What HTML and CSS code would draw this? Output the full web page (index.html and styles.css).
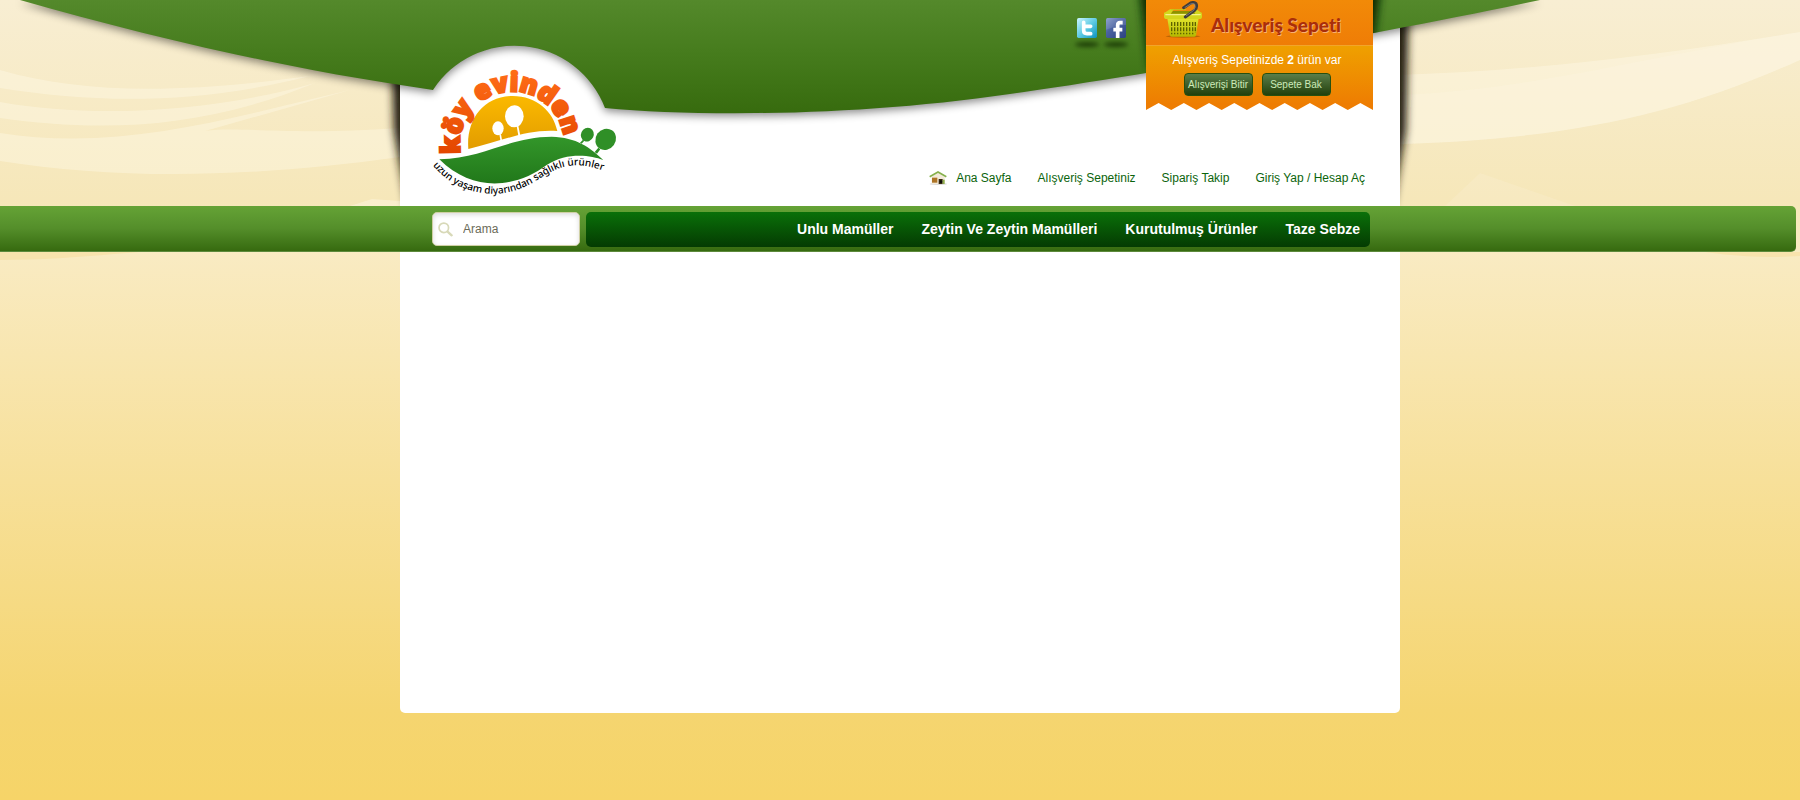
FILE: index.html
```html
<!DOCTYPE html>
<html lang="tr">
<head>
<meta charset="utf-8">
<meta name="viewport" content="width=device-width, initial-scale=1">
<title>Köy Evinden</title>
<link rel="stylesheet" href="styles.css">
</head>
<body>
<div class="scene scenery" aria-hidden="true">
  <svg class="scene-art" viewBox="0 0 1800 280">
    <defs><filter id="soft" x="-200%" y="-20%" width="500%" height="140%"><feGaussianBlur stdDeviation="4"/></filter></defs>
    <g fill="#fffbe9" fill-opacity=".4">
      <path d="M0 70C90 96 190 92 310 76C200 104 100 104 0 88Z"/>
      <path d="M0 102C100 120 220 110 315 83C200 130 100 132 0 118Z"/>
      <path d="M0 133C120 152 230 118 350 90L205 131C240 126 290 136 400 128V157C250 178 120 180 0 161Z"/>
      <path d="M350 206L372 199L400 201V206Z"/>
      <path d="M1400 75C1550 70 1680 52 1800 32V60C1680 114 1570 139 1400 144Z"/>
      <path d="M1400 95C1530 90 1630 60 1800 32V60C1680 114 1570 139 1400 144Z" fill-opacity=".2"/>
      <path d="M1445 206L1480 173L1575 206Z" fill-opacity=".15"/>
    </g>
    <path d="M0 252H140C90 256 50 260 0 260ZM1705 252C1740 257 1770 258 1800 256V252Z" fill="#f8e3ad"/>
    <path d="M391 30H410V206H407L394 130ZM1409 -10H1390V206H1393L1406 130Z" fill="#221d10" filter="url(#soft)"/>
  </svg>
</div>

<header class="site-header">
  <div class="scene" aria-hidden="true">
    <svg class="scene-art" viewBox="0 0 1800 280">
      <defs>
        <linearGradient id="leaf" x1="0" y1="0" x2="0" y2="113" gradientUnits="userSpaceOnUse"><stop offset="0" stop-color="#54892b"/><stop offset=".5" stop-color="#457b1c"/><stop offset="1" stop-color="#376b0e"/></linearGradient>
        <clipPath id="hill"><path d="M20 0C150 37 290 70 433 90A97 97 0 0 1 605 108C700 117 860 116 1010 94C1150 74 1380 34 1540 0Z"/></clipPath>
        <filter id="glow" x="-20%" y="-20%" width="140%" height="140%"><feGaussianBlur stdDeviation="4"/></filter>
      </defs>
      <path class="wave" d="M20 0C150 37 290 70 433 90A97 97 0 0 1 605 108C700 117 860 116 1010 94C1150 74 1380 34 1540 0Z" fill="url(#leaf)"/>
      <g clip-path="url(#hill)"><path d="M1139 -10H1381L1370 70H1149Z" fill="#102a02" filter="url(#glow)"/></g>
    </svg>
  </div>
  <div class="header-inner">
    <a class="logo" href="#" aria-label="Köy Evinden">
      <svg class="logo-art" viewBox="150 141 570 399">
        <defs>
          <linearGradient id="sun" x1="0" y1="0" x2="0" y2="1"><stop offset="0" stop-color="#fbb900"/><stop offset="1" stop-color="#e29c00"/></linearGradient>
          <linearGradient id="field" x1="0" y1="0" x2="0" y2="1"><stop offset="0" stop-color="#33962a"/><stop offset="1" stop-color="#21781a"/></linearGradient>
          <linearGradient id="flame" x1="0" y1="150" x2="0" y2="400" gradientUnits="userSpaceOnUse"><stop offset="0" stop-color="#ff6d17"/><stop offset="1" stop-color="#e34600"/></linearGradient>
          <path id="arch" d="M242 400A157 157 0 1 1 545 421"/>
          <path id="ridge" d="M158 436C210 497 270 519 340 522C470 517 490 437 590 436C620 436 650 444 690 459"/>
        </defs>
        <path d="M265 387C258 300 310 228 398 228C470 228 520 275 532 333C440 327 370 362 265 387Z" fill="url(#sun)"/>
        <g fill="#fff"><ellipse cx="354" cy="325" rx="17" ry="21"/><ellipse cx="403" cy="289" rx="28" ry="33"/><path d="M358 343H363L366 360H361ZM410 318L415 317L421 347H415Z"/></g>
        <path d="M178 418C310 415 390 350 515 350C590 352 630 382 670 420C630 405 560 396 500 435C410 503 280 520 178 418Z" fill="url(#field)"/>
        <g fill="#2f8f27"><ellipse cx="622" cy="344" rx="19" ry="21" transform="rotate(25 622 344)"/><ellipse cx="677" cy="358" rx="30" ry="33" transform="rotate(35 677 358)"/><path d="M609 359L613 362L605 371L600 368ZM655 383L661 388L651 401L644 396Z"/></g>
        <text class="logo-name" fill="url(#flame)" stroke="url(#flame)"><textPath href="#arch">köy evinden</textPath></text>
        <text class="logo-motto"><textPath href="#ridge">uzun yaşam diyarından sağlıklı ürünler</textPath></text>
      </svg>
    </a>

    <div class="header-side">
      <div class="header-top">
        <div class="social">
          <a href="#" aria-label="Twitter"><svg viewBox="0 0 60 60"><defs><linearGradient id="tw" x1="0" y1="0" x2="1" y2="1"><stop offset="0" stop-color="#cdf6ff"/><stop offset=".5" stop-color="#5fcbe4"/><stop offset="1" stop-color="#0c92bd"/></linearGradient></defs><rect width="60" height="60" rx="5" fill="url(#tw)"/><path d="M20 13V37Q20 47 30 47H41M21 25H41" fill="none" stroke="#fff" stroke-width="11" stroke-linecap="round"/></svg></a>
          <a href="#" aria-label="Facebook"><svg viewBox="0 0 60 60"><defs><linearGradient id="fb" x1="0" y1="0" x2="1" y2="1"><stop offset="0" stop-color="#7f95c6"/><stop offset=".4" stop-color="#4a62a0"/><stop offset="1" stop-color="#2c4381"/></linearGradient></defs><rect width="60" height="60" rx="5" fill="url(#fb)"/><path d="M0 5Q0 0 5 0H55Q60 0 60 5V20Q30 22 0 35Z" fill="#fff" fill-opacity=".12"/><path d="M50 14H42Q35 14 35 22V60M22 35H49" fill="none" stroke="#fff" stroke-width="11"/></svg></a>
        </div>

        <section class="basket">
          <div class="basket-head">
            <svg class="basket-icon" viewBox="0 0 114 111">
              <defs><linearGradient id="lime" x1="0" y1="0" x2="0" y2="1"><stop offset="0" stop-color="#e2e32c"/><stop offset="1" stop-color="#b4b800"/></linearGradient></defs>
              <ellipse cx="57" cy="106" rx="52" ry="4" fill="#8a4a00" fill-opacity=".5"/>
              <path d="M10 52H104L96 103Q95 107 91 107H23Q19 107 18 103Z" fill="url(#lime)"/>
              <path d="M18 40L26 30H88L96 40Z" fill="#8d9200"/>
              <path d="M0 37Q0 34 4 34L18 25H30L20 38H94L86 25H97L110 34Q114 35 114 39V47Q114 54 106 54H8Q0 54 0 47Z" fill="#d3d61c"/>
              <path d="M22 26H66" stroke="#c3c71a" stroke-width="3"/>
              <path d="M4 41H110" stroke="#f4f487" stroke-width="4"/>
              <g stroke="#5f6300" stroke-width="4" stroke-dasharray="12 4"><path d="M23 63V100M32 63V100M41 63V100M50 63V100M59 63V100M68 63V100M77 63V100M86 63V100M94 63V96"/></g>
              <path d="M64 48L92 28Q101 18 96 8Q90 2 80 6L59 20" fill="none" stroke="#3f3d3c" stroke-width="9" stroke-linecap="round" stroke-linejoin="round"/><path d="M66 45L89 28Q97 18 92 9Q87 6 80 9L62 20" fill="none" stroke="#999" stroke-width="2"/>
            </svg>
            <h2>Alışveriş Sepeti</h2>
          </div>
          <div class="basket-body">
            <div class="basket-info">
              <p>Alışveriş Sepetinizde <b>2</b> ürün var</p>
              <div class="basket-actions">
                <button type="button">Alışverişi Bitir</button>
                <button type="button">Sepete Bak</button>
              </div>
            </div>
          </div>
          <svg class="basket-edge" viewBox="0 0 18 2" preserveAspectRatio="none" aria-hidden="true"><path d="M0 0H18V2L17 0L16 2L15 0L14 2L13 0L12 2L11 0L10 2L9 0L8 2L7 0L6 2L5 0L4 2L3 0L2 2L1 0L0 2Z" fill="#ee7d02"/></svg>
        </section>
      </div>

      <nav class="top-links" aria-label="Hesap">
        <a class="home" href="#">
          <svg viewBox="0 0 54 42" aria-hidden="true"><ellipse cx="28" cy="39" rx="26" ry="3" fill="#ddd"/><path d="M8 17L27 5L47 17V39H8Z" fill="#f3ead9"/><path d="M2 17L27 3L52 17" fill="none" stroke="#86b04c" stroke-width="5"/><path d="M9 20H25V35H9Z" fill="#ad7426"/><path d="M29 24H41V39H29Z" fill="#3a2a12"/><circle cx="36" cy="32" r="4" fill="#0c0c0c"/><path d="M41 26H47V39H41Z" fill="#8fae4c"/></svg>
          Ana Sayfa</a>
        <a href="#">Alışveriş Sepetiniz</a>
        <a href="#">Sipariş Takip</a>
        <a href="#">Giriş Yap / Hesap Aç</a>
      </nav>
    </div>
  </div>
</header>

<div class="menu-bar">
  <div class="menu-inner">
    <form class="search" role="search">
      <svg viewBox="0 0 44 44" aria-hidden="true"><circle cx="17" cy="17" r="14" fill="none" stroke="#d8d9b8" stroke-width="5"/><path d="M28 28L40 39" stroke="#d8d9b8" stroke-width="7" stroke-linecap="round"/></svg>
      <input type="text" aria-label="Arama" placeholder="Arama">
    </form>
    <nav class="menu" aria-label="Kategoriler">
      <a href="#">Unlu Mamüller</a>
      <a href="#">Zeytin Ve Zeytin Mamülleri</a>
      <a href="#">Kurutulmuş Ürünler</a>
      <a href="#">Taze Sebze</a>
    </nav>
  </div>
</div>

<main class="content"></main>
</body>
</html>
```
FILE: styles.css
```css
* { box-sizing: border-box; }

html { min-height: 100%; background: #f6d56b; }

body {
  position: relative;
  z-index: 0;
  min-height: 100vh;
  margin: 0;
  font: 12px/16px "Liberation Sans", Arial, sans-serif;
  background: linear-gradient(#f8eed3 0, #f6e7b9 200px, #f9ebc3 250px, #f5d570 710px, #f6d468 800px);
}

a { color: inherit; text-decoration: none; }

.scene {
  position: absolute;
  inset: 0;
  display: flex;
  justify-content: center;
  align-items: flex-start;
  overflow: hidden;
  pointer-events: none;
}
.scenery { z-index: -1; }
.scene-art { flex: none; width: 1800px; height: 280px; }
.wave { filter: drop-shadow(0 3px 4px rgba(0, 0, 0, .45)); }

.site-header {
  position: relative;
  background: linear-gradient(#fff, #fff) center / 1000px 100% no-repeat;
}
.header-inner {
  position: relative;
  display: flex;
  justify-content: space-between;
  width: 1000px;
  max-width: 100%;
  min-height: 206px;
  margin: 0 auto;
  padding: 0 27px 0 30px;
}

.logo { padding-top: 67px; }
.logo-art { display: block; width: 190px; height: 133px; overflow: visible; }
.logo-name { font: 800 79px "Open Sans", sans-serif; stroke-width: 7px; }
.logo-motto { font: 500 30px "Noto Sans", sans-serif; fill: #000; }

.header-side { display: flex; flex-direction: column; align-items: flex-end; }
.header-top { display: flex; gap: 20px; }

.social { display: flex; gap: 9px; padding-top: 18px; }
.social a { width: 20px; }
.social a::after {
  content: "";
  display: block;
  width: 24px;
  height: 5px;
  margin: 4px 0 0 -2px;
  border-radius: 50%;
  background: #1e3f08;
  filter: blur(2px);
}
.social svg { display: block; width: 20px; height: 20px; }

.basket { width: 227px; color: #fff; }
.basket-head {
  display: flex;
  gap: 9px;
  height: 45px;
  padding: 1px 0 0 18px;
  background: linear-gradient(#f28a08, #ef7d06);
}
.basket-icon { flex: none; width: 38px; height: 37px; }
.basket-head h2 {
  margin: 0;
  font: 900 19px/48px Lato, sans-serif;
  font-variant-ligatures: none;
  white-space: nowrap;
  color: #a92e0a;
  text-shadow: 1px 1px 0 #f9b072;
}
.basket-body {
  padding: 6px 5px 7px 0;
  border-top: 1px solid #f2a52a;
  background: linear-gradient(#efa000, #ee7e02);
  text-align: center;
}
.basket-body p { margin: 0 0 5px; }
.basket-actions { display: flex; justify-content: center; gap: 9px; }
.basket-actions button {
  width: 69px;
  height: 23px;
  padding: 0;
  border: 1px solid #27500f;
  border-radius: 4px;
  background: linear-gradient(#5a7d49, #22400c);
  font: 10px/20px "Liberation Sans", Arial, sans-serif;
  white-space: nowrap;
  color: #cdeab9;
}
.basket-edge { display: block; width: 100%; height: 7px; }

.top-links {
  display: flex;
  align-items: center;
  gap: 26px;
  height: 32px;
  margin-top: 52px;
  padding-right: 8px;
  white-space: nowrap;
  color: #0b640c;
}
.home { display: flex; align-items: center; gap: 9px; }
.home svg { width: 18px; height: 14px; }

.menu-bar {
  margin-right: 4px;
  height: 46px;
  border-bottom: 1px solid #5d8a3c;
  border-radius: 0 5px 5px 0;
  background: linear-gradient(#65a336, #548e2a 50%, #366a0f);
}
.menu-inner {
  display: flex;
  gap: 6px;
  width: 1000px;
  max-width: 100%;
  margin: 0 auto;
  padding: 6px 28px 0 34px;
}
.search {
  display: flex;
  align-items: center;
  gap: 10px;
  width: 148px;
  height: 34px;
  padding: 0 5px;
  border: 1px solid #cfd0a4;
  border-radius: 5px;
  background: #fff;
  box-shadow: inset 0 2px 5px #ddd;
}
.search svg { flex: none; width: 15px; height: 15px; }
.search input {
  width: 100%;
  min-width: 0;
  padding: 0;
  border: 0;
  outline: 0;
  background: none;
  font: 12px/16px "Liberation Sans", Arial, sans-serif;
}
.search input::placeholder { color: #6b6b58; opacity: 1; }
.menu {
  flex: 1;
  display: flex;
  justify-content: flex-end;
  gap: 28px;
  height: 35px;
  padding-right: 10px;
  border-radius: 5px;
  background: linear-gradient(#0a7009, #043b02);
  font-size: 14px;
  line-height: 34px;
  font-weight: bold;
  white-space: nowrap;
  color: #fff;
}

.content {
  width: 1000px;
  max-width: 100%;
  min-height: 461px;
  margin: 0 auto;
  border-radius: 0 0 5px 5px;
  background: #fff;
}
```
